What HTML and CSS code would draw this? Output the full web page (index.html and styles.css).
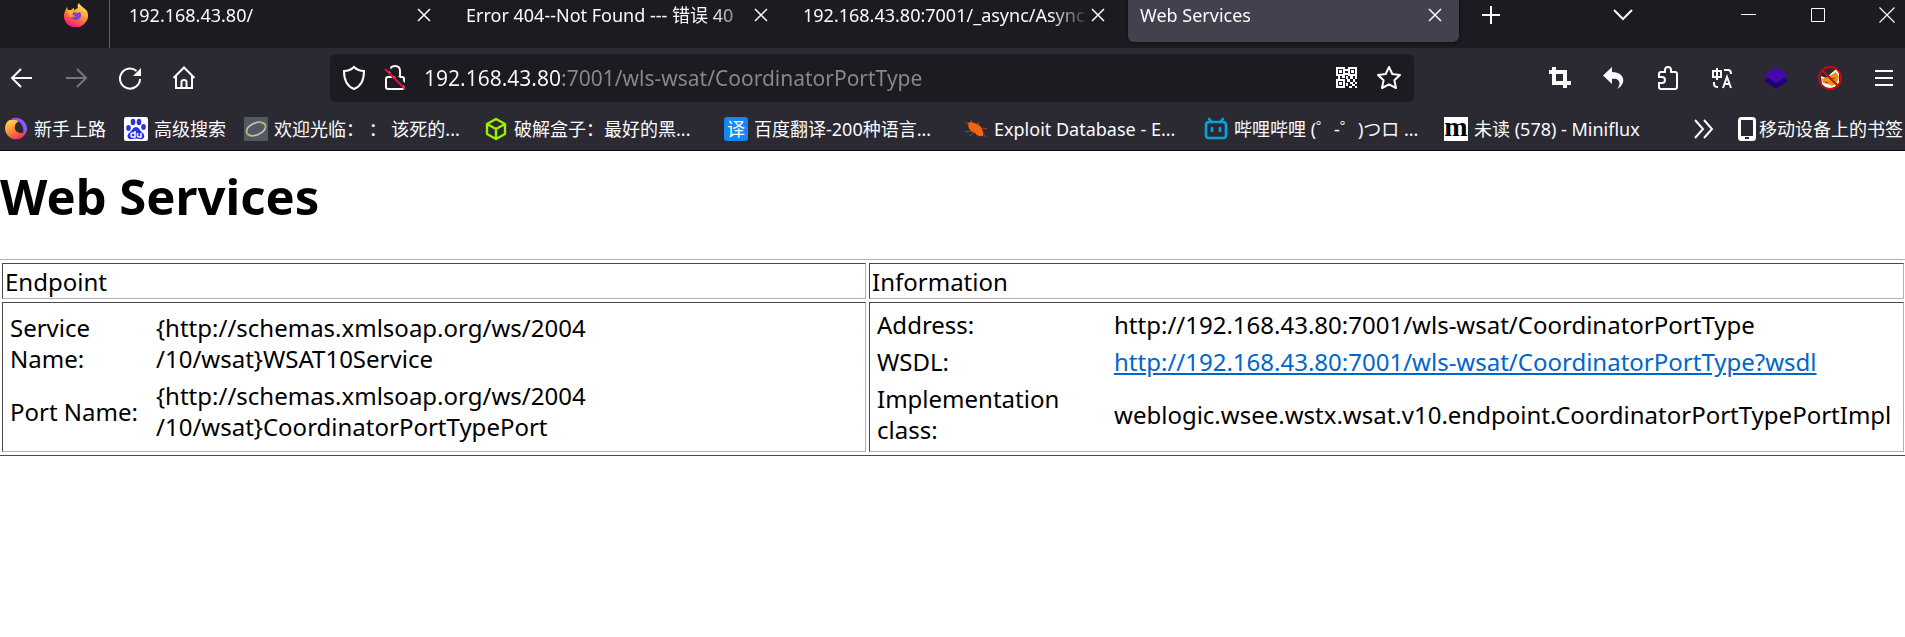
FILE: index.html
```html
<!DOCTYPE html>
<html lang="zh-CN">
<head>
<meta charset="utf-8">
<title>Web Services</title>
<link rel="stylesheet" href="styles.css">
</head>
<body>
<header class="chrome">
  <div class="tabbar">
    <button class="pinned" aria-label="Firefox">
      <svg width="24" height="24" viewBox="0 0 24 24"><defs><linearGradient id="fx" x1=".8" y1="0" x2=".3" y2="1"><stop offset="0" stop-color="#fff36a"/><stop offset=".45" stop-color="#ff9a2e"/><stop offset=".8" stop-color="#ff4056"/><stop offset="1" stop-color="#e8158a"/></linearGradient></defs><path fill="url(#fx)" d="M15 0c1 3 6 5 8 8 2 5 1 9-2 12-3 4-8 5-12 4-5-1-9-5-9-11 0-3 1-5 2-7l1-2 1 3 3 0c1-1 2-2 3-2l0 2 4-2c-1-2 0-4 1-5z"/><path fill="#7a3fe0" d="M9 9l4 1 3-1c2 3 1 6-1 7-3 2-7 1-8-2 2 1 4 0 5-1-2 0-4-2-3-4z"/><path fill="#ffb02e" d="M3 7l5 0 2 2-3 2 2 2-3 1z"/></svg>
    </button>
    <div class="tab"><button class="tab-title">192.168.43.80/</button><button class="tab-x" aria-label="关闭"><svg width="14" height="14" viewBox="0 0 14 14"><path d="M1 1l12 12M13 1L1 13"/></svg></button></div>
    <div class="tab"><button class="tab-title">Error 404--Not Found --- 错误 40</button><button class="tab-x" aria-label="关闭"><svg width="14" height="14" viewBox="0 0 14 14"><path d="M1 1l12 12M13 1L1 13"/></svg></button></div>
    <div class="tab"><button class="tab-title">192.168.43.80:7001/_async/Async</button><button class="tab-x" aria-label="关闭"><svg width="14" height="14" viewBox="0 0 14 14"><path d="M1 1l12 12M13 1L1 13"/></svg></button></div>
    <div class="tab active"><button class="tab-title">Web Services</button><button class="tab-x" aria-label="关闭"><svg width="14" height="14" viewBox="0 0 14 14"><path d="M1 1l12 12M13 1L1 13"/></svg></button></div>
    <button class="new-tab" aria-label="新标签页"><svg width="18" height="18" viewBox="0 0 18 18"><path d="M9 0v18M0 9h18"/></svg></button>
    <div class="window-buttons">
      <button class="list-tabs" aria-label="标签页列表"><svg width="20" height="12" viewBox="0 0 20 12"><path stroke-width="2" d="M1 1l9 9 9-9"/></svg></button>
      <button aria-label="最小化"><svg width="16" height="16" viewBox="0 0 16 16"><path stroke-width="1" d="M0 7.500h15"/></svg></button>
      <button aria-label="最大化"><svg width="14" height="14" viewBox="0 0 14 14"><path stroke-width="1" d="M.5.5h13v13H.5z"/></svg></button>
      <button aria-label="关闭窗口"><svg width="16" height="16" viewBox="0 0 16 16"><path stroke-width="1.2" d="M.5.5l15 15M15.5.5l-15 15"/></svg></button>
    </div>
  </div>

  <div class="toolbar">
    <nav class="tools">
      <button aria-label="后退"><svg width="24" height="24" viewBox="0 0 24 24"><path d="M22 12H2M11 3l-9 9 9 9"/></svg></button>
      <button class="dim" aria-label="前进"><svg width="24" height="24" viewBox="0 0 24 24"><path d="M2 12h20M13 3l9 9-9 9"/></svg></button>
      <button aria-label="刷新"><svg width="24" height="24" viewBox="0 0 24 24"><path d="M22 13A10 10 0 1 1 18.500 5"/><path class="fill" d="M23 2v8h-8z"/></svg></button>
      <button aria-label="主页"><svg width="24" height="24" viewBox="0 0 24 24"><path d="M1.500 12L12 1.500 22.500 12M4 10v12h16V10M9.500 22v-6q0-2 2.500-2t2.500 2v6"/></svg></button>
    </nav>
    <div class="urlbar">
      <svg width="24" height="26" viewBox="0 0 24 26"><path d="M12 2c3 3 6 4 10 4 0 8-2 15-10 18C4 21 2 14 2 6c4 0 7-1 10-4z"/></svg>
      <svg width="24" height="26" viewBox="0 0 24 26"><path d="M7 8V6q0-5 5-5t5 5v6M5 12h14q2 0 2 2v8q0 2-2 2H5q-2 0-2-2v-8q0-2 2-2z"/><path stroke="#1c1b22" stroke-width="3" d="M4 2l20 20"/><path stroke="#ff0039" d="M2 4l20 20"/></svg>
      <input class="url" type="text" aria-label="地址" value="192.168.43.80:7001/wls-wsat/CoordinatorPortType">
      <button aria-label="二维码"><svg width="24" height="24" viewBox="0 0 24 24"><path d="M2 2h7v7H2zM14 2h7v7h-7zM2 14h7v7H2z"/><path class="fill" d="M4 4h3v3H4zM16 4h3v3h-3zM4 16h3v3H4zM10 3h3v2h-3zM10 7h3v2h-3zM3 10h2v3H3zM7 10h3v2H7zM11 10h2v3h-2zM15 10h3v3h-3zM20 10h2v3h-2zM12 13h3v3h-3zM18 13h2v3h-2zM15 16h3v2h-3zM20 16h2v2h-2zM11 17h2v3h-2zM17 18h3v2h-3zM14 20h3v2h-3zM20 20h2v2h-2z"/></svg></button>
      <button aria-label="添加书签"><svg width="26" height="26" viewBox="0 0 26 26"><path stroke-linejoin="round" d="M13 2l3.300 7 7.700 1-5.600 5.300L20 23l-7-3.700L6 23l1.600-7.700L2 10l7.700-1z"/></svg></button>
    </div>
    <nav class="tools addons">
      <button aria-label="截图"><svg width="24" height="24" viewBox="0 0 24 24"><path stroke-width="4" d="M1 6h16v16M6 1v16h17"/></svg></button>
      <button aria-label="撤销"><svg width="24" height="24" viewBox="0 0 24 24"><path class="fill" d="M10 1L1 9.500 10 18v-5c7-1 10 4 5 10 10-5 8-17-5-17z"/></svg></button>
      <button aria-label="扩展"><svg width="24" height="26" viewBox="0 0 24 26"><path d="M3 12V9q0-2 2-2h4V5q0-3 3-3t3 3v2h4q2 0 2 2v13q0 2-2 2H5q-2 0-2-2v-4h3q3 0 3-3t-3-3z"/></svg></button>
      <button aria-label="翻译"><svg width="24" height="24" viewBox="0 0 24 24"><path d="M3 5h8v6H3zM7 2v12M14 4h4q3 0 3 4M4 16v2q0 3 4 3M13 22l4-11 4 11M14.500 18h5"/></svg></button>
      <button aria-label="Wappalyzer"><svg width="24" height="24" viewBox="0 0 24 24"><path fill="#1c0078" stroke="none" d="M12 7l12 8-12 8-12-8z"/><path fill="#4608ad" stroke="none" d="M12 1l12 8-12 8L0 9z"/></svg></button>
      <button aria-label="FoxyProxy"><svg width="24" height="24" viewBox="0 0 24 24"><path stroke="none" fill="#fff" d="M18 3l3 4v10l-6 5H8l-4-4-1-8 5 2z"/><path stroke="none" fill="#f28c13" d="M18 6l3 5-2 6-5 3-4-2-5-1-1-4 5-2 4-2z"/><path stroke="#753512" stroke-width="1" d="M7 16l3 1M14 13l3-1"/><circle cx="12" cy="12" r="11" stroke="#c60a12" stroke-width="1.800"/><path stroke="#c60a12" d="M4 4l16 16"/></svg></button>
      <button aria-label="菜单"><svg width="20" height="18" viewBox="0 0 20 18"><path d="M1 2h18M1 9h18M1 16h18"/></svg></button>
    </nav>
  </div>

  <nav class="bookmarks">
    <a class="short" href="#"><svg width="24" height="24" viewBox="0 0 24 24"><defs><linearGradient id="fb" x1=".1" y1=".2" x2=".6" y2="1"><stop offset="0" stop-color="#ffc847"/><stop offset=".6" stop-color="#ff7139"/><stop offset="1" stop-color="#f02b72"/></linearGradient></defs><path fill="url(#fb)" d="M3 5a11 11 0 1 0 20 7c-1 2-3 4-6 4-4 0-7-3-6-7 0-2 2-4 4-5C10 2 6 2 3 5z"/><path fill="#9059ff" d="M7 2c8-4 17 3 16 11-1 2-3 3-4 3 2-6-3-14-12-14z"/></svg><span>新手上路</span></a>
    <a class="short" href="#"><svg width="24" height="24" viewBox="0 0 24 24"><rect width="24" height="24" rx="2" fill="#fff"/><g fill="#2a32e2"><ellipse cx="4.500" cy="11" rx="2.300" ry="3"/><ellipse cx="9" cy="5" rx="2.300" ry="3.200"/><ellipse cx="15" cy="5" rx="2.300" ry="3.200"/><ellipse cx="19.500" cy="10" rx="2.300" ry="3"/><path d="M12 10c3 0 4 4 7 6 3 4 0 7-3 6q-4-1-8 0c-4 1-6-3-3-6 3-2 4-6 7-6z"/></g><path fill="none" stroke="#fff" stroke-width="1.500" d="M11 14v6H8q-1 0-1-2t2-2h2M13.500 16v3q0 1 3.500 1v-4"/></svg><span>高级搜索</span></a>
    <a href="#"><svg width="24" height="24" viewBox="0 0 24 24"><path fill="#525962" d="M0 0h24v24H0z"/><ellipse cx="12" cy="12" rx="10" ry="6" fill="none" stroke="#c9ccd0" stroke-width="1.500" transform="rotate(-22 12 12)"/><path fill="none" stroke="#a6b54a" stroke-width="1.500" d="M13 5q11-1 8 7M3 13q-1 7 7 6"/></svg><span>欢迎光临： ： 该死的...</span></a>
    <a href="#"><svg width="24" height="24" viewBox="0 0 24 24"><path fill="none" stroke="#9fef00" stroke-width="2.400" stroke-linejoin="round" d="M12 2l9 5v10l-9 5-9-5V7zM3 7l9 5 9-5M12 12v10"/></svg><span>破解盒子：最好的黑...</span></a>
    <a href="#"><span class="fanyi">译</span><span>百度翻译-200种语言...</span></a>
    <a href="#"><svg width="24" height="24" viewBox="0 0 24 24"><path fill="#f26411" d="M4 6q3-2 6 0 6 1 8 6 2 4 1 7-5 1-8-3Q4 14 4 6z"/><path fill="none" stroke="#9a4a20" d="M1 5l4 3M7 3l1 3M15 5l-1 4M1 15l6-1M5 19l5-3M18 11l5 1M20 17l2 3"/></svg><span>Exploit Database - E...</span></a>
    <a href="#"><svg width="24" height="24" viewBox="0 0 24 24"><path fill="none" stroke="#06a2dc" stroke-width="2.600" stroke-linecap="round" d="M5 2l3 3M19 2l-3 3M5 5h14q3 0 3 3v10q0 3-3 3H5q-3 0-3-3V8q0-3 3-3zM8 11v3M16 11v3"/></svg><span>哔哩哔哩 (゜-゜)つロ ...</span></a>
    <a href="#"><span class="miniflux">m</span><span>未读 (578) - Miniflux</span></a>
    <div class="bookmark-end">
      <button aria-label="更多书签"><svg width="20" height="20" viewBox="0 0 20 20"><path d="M1 1l8 9-8 9M10 1l8 9-8 9"/></svg></button>
      <a class="mobile" href="#"><svg width="18" height="24" viewBox="0 0 18 24"><rect x="1.500" y="1.500" width="15" height="21" rx="2" fill="none" stroke="#fff" stroke-width="3"/><path fill="#fff" d="M2 19h14v4H2z"/><path fill="#2b2a33" d="M7 20h4v2H7z"/></svg><span>移动设备上的书签</span></a>
    </div>
  </nav>
</header>

<main class="page">
  <h1>Web Services</h1>
  <table class="services">
    <colgroup><col class="endpoint-col"><col></colgroup>
    <tr><td>Endpoint</td><td>Information</td></tr>
    <tr>
      <td>
        <table class="details endpoint">
          <tr><td>Service<br>Name:</td><td>{http://schemas.xmlsoap.org/ws/2004<br>/10/wsat}WSAT10Service</td></tr>
          <tr><td>Port Name:</td><td>{http://schemas.xmlsoap.org/ws/2004<br>/10/wsat}CoordinatorPortTypePort</td></tr>
        </table>
      </td>
      <td>
        <table class="details information">
          <tr><td>Address:</td><td>http://192.168.43.80:7001/wls-wsat/CoordinatorPortType</td></tr>
          <tr><td>WSDL:</td><td><a href="#">http://192.168.43.80:7001/wls-wsat/CoordinatorPortType?wsdl</a></td></tr>
          <tr><td>Implementation<br>class:</td><td>weblogic.wsee.wstx.wsat.v10.endpoint.CoordinatorPortTypePortImpl</td></tr>
        </table>
      </td>
    </tr>
  </table>
</main>
</body>
</html>
```
FILE: styles.css
```css
* { box-sizing: border-box; }
body {
  margin: 0;
  overflow-x: hidden;
  background: #fff;
  color: #000;
  font-family: "Noto Sans", "Noto Sans CJK SC", sans-serif;
}
button {
  display: flex;
  align-items: center;
  justify-content: center;
  padding: 0;
  border: 0;
  background: none;
  color: inherit;
  font: inherit;
}
svg { display: block; flex: none; }

.chrome {
  overflow: hidden;
  background: #2b2a33;
  color: #fbfbfe;
  font-size: 18px;
  line-height: 24px;
  border-bottom: 1px solid #0c0c0d;
}
.chrome button svg, .urlbar svg {
  fill: none;
  stroke: currentColor;
  stroke-width: 2;
}
.chrome .fill { fill: currentColor; stroke: none; }

.tabbar {
  display: flex;
  align-items: flex-start;
  height: 48px;
  background: #1c1b22;
}
.pinned {
  width: 110px;
  height: 48px;
  padding: 3px 0 21px 42px;
  border-right: 1px solid #5b5b66;
}
.pinned svg { stroke: none !important; }
.tab {
  display: flex;
  align-items: center;
  width: 331px;
  height: 42px;
  margin-left: 6px;
  padding: 0 17px 12px 12px;
  border-radius: 0 0 6px 6px;
}
.pinned + .tab { margin-left: 7px; }
.tab.active { background: #42414d; box-shadow: 0 0 4px #0c0c0d; }
.tab-title {
  flex: 1;
  justify-content: flex-start;
  overflow: hidden;
  white-space: nowrap;
  mask-image: linear-gradient(to left, transparent, #000 42px);
}
.tab .tab-x svg { stroke-width: 1.5; }
.new-tab { width: 64px; height: 30px; }
.window-buttons { display: flex; margin-left: auto; margin-right: -16px; }
.window-buttons button { width: 69px; height: 30px; }
.window-buttons .list-tabs { width: 110px; margin-right: 36px; }

.toolbar {
  display: flex;
  align-items: center;
  height: 60px;
}
.tools { display: flex; width: 330px; padding-left: 10px; gap: 30px; }
.tools button { width: 24px; height: 26px; }
.tools .dim { color: #77767e; }
.addons { width: auto; margin-left: auto; padding-right: 9px; }
.urlbar {
  display: flex;
  align-items: center;
  flex: 1;
  height: 48px;
  max-width: 1084px;
  padding: 0 12px;
  gap: 17px;
  border-radius: 6px;
  background: #1c1b22;
}
.url {
  flex: 1;
  min-width: 0;
  padding: 0;
  border: 0;
  font: 21px/30px "Noto Sans", sans-serif;
  color: transparent;
  background: linear-gradient(90deg, #fbfbfe 138px, #8a898f 138px) text;
}

.bookmarks {
  display: flex;
  align-items: center;
  height: 42px;
  padding: 0 2px 0 4px;
}
.bookmarks a {
  display: flex;
  align-items: center;
  gap: 6px;
  width: 240px;
  color: inherit;
  text-decoration: none;
  white-space: nowrap;
}
.bookmarks .short { width: 120px; }
.bookmark-end { display: flex; gap: 24px; margin-left: auto; }
.bookmarks .mobile { width: auto; gap: 3px; }
.fanyi, .miniflux {
  width: 24px;
  height: 24px;
  text-align: center;
  border-radius: 3px;
  background: #1487f5;
}
.miniflux {
  border-radius: 0;
  background: #fff;
  color: #000;
  font: bold 28px/20px "Liberation Serif", serif;
}

.page { font-size: 24px; line-height: 31px; }
h1 {
  margin: 0;
  padding: 12px 0 30px;
  font-size: 49px;
  line-height: 66px;
}
table { border-spacing: 3px; }
td { padding: 2px 2px 1px; }
.services {
  width: calc(100% + 5px);
  margin: 0 -2px;
  table-layout: fixed;
  border: 1px solid;
  border-color: #b1b1b1 #4a4a4a #4a4a4a #b1b1b1;
}
.services > tbody > tr > td {
  border: 1px solid;
  border-color: #4a4a4a #b1b1b1 #b1b1b1 #4a4a4a;
}
.endpoint-col { width: 45.5%; }
.services .details td { padding: 1px 2px 2px; white-space: nowrap; }
.endpoint td:first-child { width: 143px; }
.information td:first-child { width: 234px; }
.details a { color: #0066cc; }
```
